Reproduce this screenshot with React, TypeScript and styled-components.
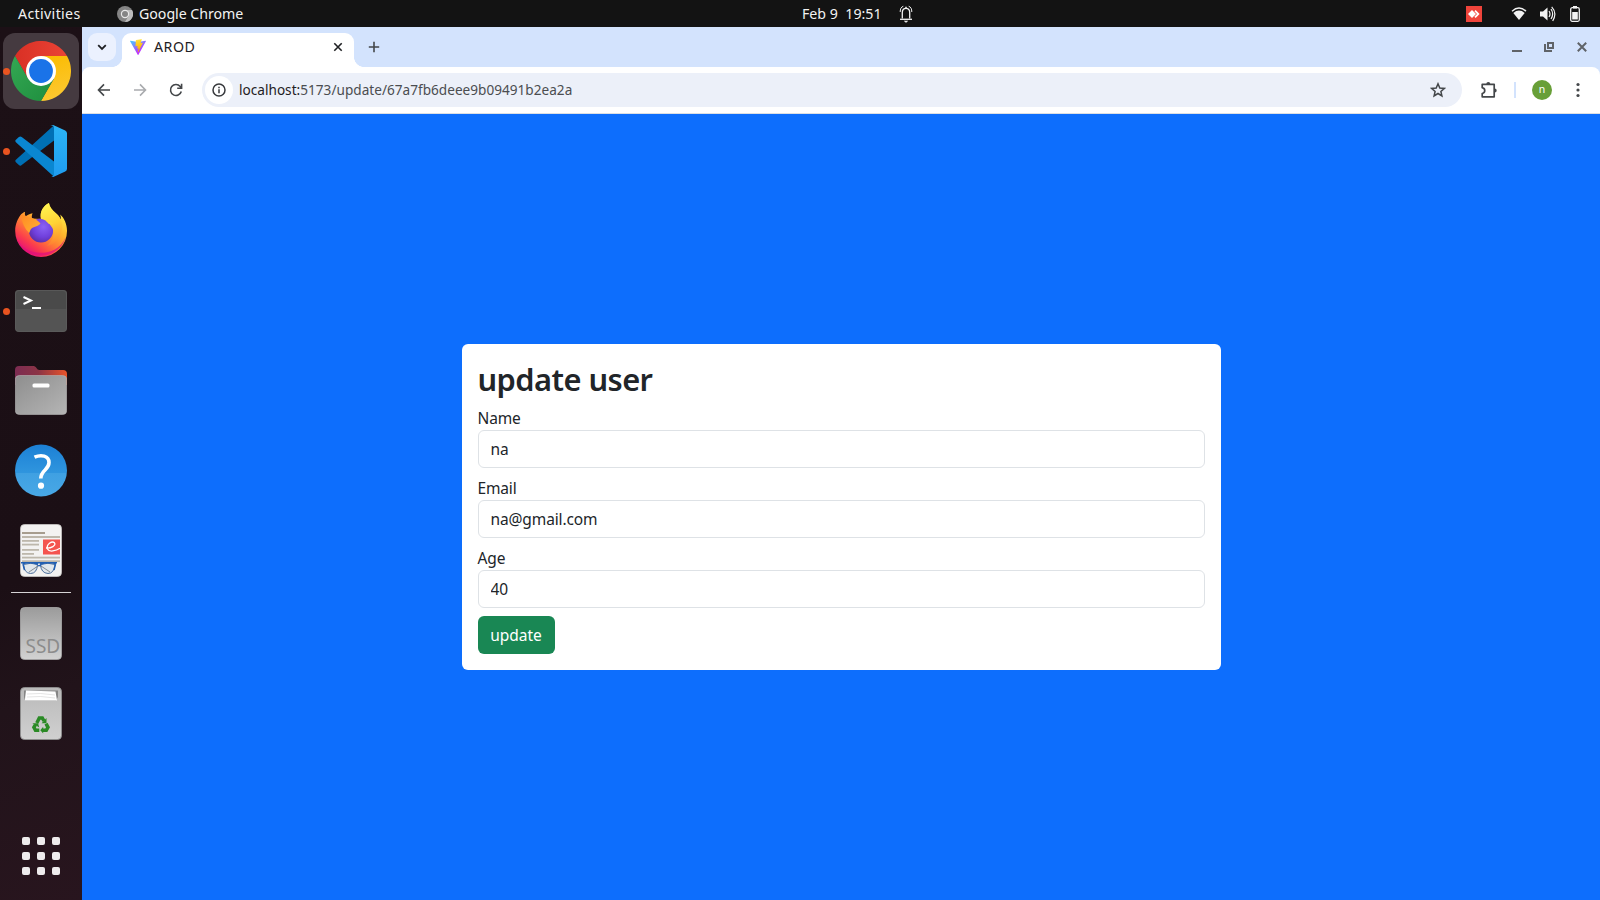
import React from 'react';
import styled, { createGlobalStyle } from 'styled-components';

const GlobalStyle = createGlobalStyle`
  *, *::before, *::after { box-sizing: border-box; }
  body { margin: 0; overflow: hidden; }
  body, input, button { font-family: 'Noto Sans', 'Open Sans', sans-serif; }
  svg { display: block; flex: none; }
`;

const Desktop = styled.div`
  display: grid;
  grid-template-columns: 82px 1fr;
  grid-template-rows: 27px 1fr;
  width: 1600px;
  height: 900px;
  overflow: hidden;
`;

/* ---------- top panel ---------- */
const Panel = styled.header`
  grid-column: 1 / -1;
  display: grid;
  grid-template-columns: 802px 1fr auto;
  align-items: center;
  background: #131313;
  color: #f2f2f2;
  font-size: 14.2px;
  line-height: 26px;
  white-space: pre;
`;
const PanelLeft = styled.div`
  display: flex;
  align-items: center;
  padding-left: 18px;
`;
const Activities = styled.span`
  width: 99px;
  letter-spacing: 0.35px;
`;
const AppName = styled.span`
  margin-left: 6px;
  letter-spacing: -0.04px;
`;
const PanelClock = styled.div`
  display: flex;
  align-items: center;
  gap: 17px;
`;
const Tray = styled.div`
  display: flex;
  align-items: center;
  padding-right: 20px;
`;
const TrayItem = styled.div<{ $gap?: number }>`
  margin-left: ${p => p.$gap ?? 0}px;
`;

/* ---------- dock ---------- */
const Dock = styled.nav`
  display: flex;
  flex-direction: column;
  gap: 4px;
  padding: 6px 3px;
  background: linear-gradient(160deg, #1c1016 0%, #1b0f15 62%, #21131a 76%, #28151e 100%);
`;
const DockItem = styled.div<{ $active?: boolean; $last?: boolean; $lift?: number }>`
  position: relative;
  display: flex;
  align-items: center;
  justify-content: center;
  width: 76px;
  height: 76px;
  flex: none;
  border-radius: 12px;
  margin-top: ${p => (p.$last ? 'auto' : 0)};
  padding-bottom: ${p => p.$lift ?? 0}px;
  background: ${p => (p.$active ? '#453a40' : 'transparent')};
`;
const RunningDot = styled.i`
  position: absolute;
  left: 0;
  top: 34.5px;
  width: 7px;
  height: 7px;
  border-radius: 50%;
  background: #e95420;
`;
const DockRule = styled.hr`
  width: 60px;
  height: 1px;
  margin: -1px auto;
  border: 0;
  flex: none;
  background: #d6d3d5;
`;
const AppGrid = styled.div`
  display: grid;
  grid-template-columns: repeat(3, 8px);
  grid-auto-rows: 8px;
  gap: 7px;
`;
const AppCell = styled.span`
  border-radius: 2px;
  background: #eeeced;
`;

/* ---------- browser ---------- */
const Browser = styled.main`
  display: grid;
  grid-template-rows: 40px 47px 1fr;
  background: #d3e3fd;
  min-width: 0;
`;
const TabStrip = styled.div`
  display: flex;
  align-items: flex-start;
  padding: 6px 13px 0 6px;
`;
const TabSearch = styled.div`
  display: grid;
  place-items: center;
  width: 28px;
  height: 28px;
  border-radius: 9px;
  background: #ebf1fe;
`;
const Tab = styled.div`
  position: relative;
  display: flex;
  align-items: center;
  width: 232px;
  height: 34px;
  margin-left: 6px;
  padding: 0 10px 6px 8px;
  border-radius: 9px 9px 0 0;
  background: #fff;
  &::before, &::after {
    content: '';
    position: absolute;
    bottom: 0;
    width: 10px;
    height: 10px;
  }
  &::before {
    left: -10px;
    background: radial-gradient(circle at 0 0, transparent 9.6px, #fff 10.2px);
  }
  &::after {
    right: -10px;
    background: radial-gradient(circle at 100% 0, transparent 9.6px, #fff 10.2px);
  }
`;
const TabTitle = styled.span`
  flex: 1;
  margin-left: 8px;
  font-size: 14.2px;
  line-height: 28px;
  letter-spacing: 0.5px;
  color: #1f2023;
`;
const NewTab = styled.div`
  display: grid;
  place-items: center;
  width: 28px;
  height: 28px;
  margin-left: 6px;
`;
const WindowControls = styled.div`
  display: flex;
  align-items: center;
  gap: 22px;
  height: 28px;
  margin-left: auto;
  svg:last-child { margin-left: 1px; }
`;
const Toolbar = styled.div`
  display: flex;
  align-items: center;
  padding: 0 8px;
  background: #fff;
  border-bottom: 1px solid #dcdfe4;
  border-radius: 8px 8px 0 0;
`;
const ToolButton = styled.div<{ $left?: number }>`
  display: grid;
  place-items: center;
  width: 28px;
  height: 28px;
  flex: none;
  margin-left: ${p => p.$left ?? 0}px;
`;
const Omnibox = styled.div`
  display: flex;
  align-items: center;
  flex: 1;
  height: 34px;
  margin-left: 12px;
  padding: 0 10px 0 3px;
  border-radius: 17px;
  background: #ecf0f9;
`;
const SiteInfo = styled.div`
  display: grid;
  place-items: center;
  width: 28px;
  height: 28px;
  border-radius: 50%;
  background: #fff;
`;
const Address = styled.div`
  flex: 1;
  margin-left: 6px;
  font-size: 13.6px;
  line-height: 20px;
  letter-spacing: 0.015px;
  color: #4b4d50;
`;
const Host = styled.span`
  color: #1f2023;
`;
const Divider = styled.span`
  width: 2px;
  height: 16px;
  margin-left: 11px;
  background: #d3e3fd;
`;
const Avatar = styled.div`
  width: 20px;
  height: 20px;
  margin-left: 16px;
  border-radius: 50%;
  background: #689f38;
  color: #fff;
  font-size: 10.5px;
  line-height: 18px;
  text-align: center;
`;

/* ---------- page ---------- */
const Page = styled.section`
  display: flex;
  align-items: center;
  justify-content: center;
  background: #0d6efd;
`;
const Card = styled.form`
  width: 50%;
  padding: 16px;
  border-radius: 6px;
  background: #fff;
  color: #212529;
  font-size: 15.5px;
`;
const Heading = styled.h2`
  margin: 0 0 8px;
  font-size: 30.8px;
  font-weight: 600;
  line-height: 38.4px;
  letter-spacing: -0.55px;
`;
const Field = styled.div`
  margin-bottom: 8px;
`;
const Label = styled.label`
  display: block;
  line-height: 24px;
  letter-spacing: -0.15px;
`;
const Input = styled.input`
  display: block;
  width: 100%;
  height: 38px;
  padding: 6px 12px;
  border: 1px solid #dee2e6;
  border-radius: 6px;
  outline: 0;
  background: #fff;
  color: #212529;
  font-size: 15.5px;
  line-height: 24px;
  letter-spacing: -0.12px;
`;
const Submit = styled.button`
  display: block;
  width: 77px;
  height: 38px;
  padding: 0;
  border: 0;
  border-radius: 6px;
  background: #198754;
  color: #fff;
  font-size: 15.5px;
  line-height: 24px;
`;

/* ---------- icons ---------- */
const ChromeLogo = () => (
  <svg width="60" height="60" viewBox="0 0 60 60">
    <defs>
      <linearGradient id="cr" x1="0" x2="1"><stop offset="0" stopColor="#d93025" /><stop offset="1" stopColor="#ea4335" /></linearGradient>
      <linearGradient id="cy" x1="0.6" y1="1" x2="0.4" y2="0"><stop offset="0" stopColor="#fcc934" /><stop offset="1" stopColor="#fbbc04" /></linearGradient>
      <linearGradient id="cg" x1="1" y1="1" x2="0" y2="0"><stop offset="0" stopColor="#1e8e3e" /><stop offset="1" stopColor="#34a853" /></linearGradient>
    </defs>
    <path d="M30 15H56A30 30 0 0 0 4 15L17 37.5L30 30Z" fill="url(#cr)" />
    <path d="M43 37.5L30 60A30 30 0 0 0 56 15H30V30Z" fill="url(#cy)" />
    <path d="M17 37.5L4 15A30 30 0 0 0 30 60L43 37.5L30 30Z" fill="url(#cg)" />
    <circle cx="30" cy="30" r="15" fill="#fff" />
    <circle cx="30" cy="30" r="11.9" fill="#1a73e8" />
  </svg>
);

const CodeLogo = () => (
  <svg width="52" height="52" viewBox="0 0 52 52">
    <defs>
      <linearGradient id="vs" x1="0" y1="0" x2="0" y2="1"><stop offset="0" stopColor="#2cb4f5" /><stop offset="1" stopColor="#1f9cf0" /></linearGradient>
    </defs>
    <path d="M39 .3L.9 34.8a1.7 1.7 0 0 0 0 2.4l3 2.8a2.2 2.2 0 0 0 2.8.1L39 15.4Z" fill="#0070b5" />
    <path d="M39 51.7L.9 17.2a1.7 1.7 0 0 1 0-2.4l3-2.7a2.2 2.2 0 0 1 2.8-.1L39 36.6Z" fill="#0a87d1" />
    <path d="M38.8 51.7a3.2 3.2 0 0 1-3.2-.6c1.2 1.1 3.4.2 3.4-1.5V2.4C39 .7 36.8-.2 35.600 1a3.200 3.200 0 0 1 3.700-.6L50.200 5.500a3.200 3.200 0 0 1 1.800 2.900v35.200a3.200 3.200 0 0 1-1.800 2.900Z" fill="url(#vs)" />
  </svg>
);

const FirefoxLogo = () => (
  <svg width="54" height="54" viewBox="0 0.8 54 54.4">
    <defs>
      <linearGradient id="fb" x1="0.85" y1="0.1" x2="0.25" y2="0.95">
        <stop offset="0" stopColor="#fff04a" /><stop offset="0.35" stopColor="#ffb52c" /><stop offset="0.6" stopColor="#ff7a35" /><stop offset="0.82" stopColor="#fb3a4e" /><stop offset="1" stopColor="#e5107a" />
      </linearGradient>
      <linearGradient id="fy" x1="0.4" y1="0" x2="0.6" y2="1">
        <stop offset="0" stopColor="#fff350" /><stop offset="0.5" stopColor="#ffd235" /><stop offset="1" stopColor="#ff8a2c" stopOpacity="0.3" />
      </linearGradient>
      <radialGradient id="fp" cx="0.6" cy="0.35" r="0.7"><stop offset="0" stopColor="#8a62f5" /><stop offset="0.6" stopColor="#7040dc" /><stop offset="1" stopColor="#5a2ca5" /></radialGradient>
      <linearGradient id="ff" x1="0" y1="0" x2="1" y2="1"><stop offset="0" stopColor="#ff8a25" /><stop offset="1" stopColor="#ffb330" /></linearGradient>
    </defs>
    <path d="M1 29C1 22 4 16.500 6 13.500C7 11.500 9.500 10 11 9.500C10.500 11.500 10.800 13 11.300 14.500C13 13 16 11.500 18.500 11C17.700 13 17.500 14.500 18 16.500L27 17C25.500 10 29 4 35 .8C35.500 4.500 38 8 42 11C44.500 13 46 15 47 17.500C47.200 15.500 46.800 14 46.300 12.500C50.500 16 53.300 23 53.200 29A26.100 26.100 0 0 1 1 29Z" fill="url(#fb)" />
    <path d="M2 35A26 26 0 0 0 52 35C47 47 36 51 27 51C15 51 6 45 2 35Z" fill="#e0127b" opacity="0.75" />
    <circle cx="27" cy="28.500" r="12.200" fill="url(#fp)" />
    <path d="M27 17C25.500 10 29 4 35 .8C35.500 4.500 38 8 42 11C48 16 50 24 47 31C45 38 40 43 33 44C40 38 42 30 37 24C35 20.500 31 17.500 27 17Z" fill="url(#fy)" />
    <path d="M7 13C10 13 12 14 14 15C18 16 23 17 26.500 21.500C25 24 20 24.500 17.500 26.500C16 27.500 16 30 15 31C11 27 8 22 7 13Z" fill="url(#ff)" />
    <path d="M32 19C35 18.500 38 20 39.500 22.500C37 21.500 36 21.500 35 22Z" fill="#ffd83c" />
  </svg>
);

const TerminalLogo = () => (
  <svg width="52" height="42" viewBox="0 0 52 42">
    <rect width="52" height="42" rx="4" fill="#545454" />
    <path d="M0 19V4a4 4 0 0 1 4-4H48a4 4 0 0 1 4 4V19Z" fill="#4a4a4a" />
    <rect x=".5" y=".5" width="51" height="41" rx="3.500" fill="none" stroke="#5c5c5c" strokeWidth=".8" />
    <path d="M8.500 7L16 10.500L8.500 14" fill="none" stroke="#fff" strokeWidth="2" />
    <rect x="17" y="17" width="9" height="2" fill="#fff" />
  </svg>
);

const FilesLogo = () => (
  <svg width="52" height="50" viewBox="0 0 52 50">
    <defs>
      <linearGradient id="fo" x1="0" x2="1"><stop offset="0" stopColor="#7c2c52" /><stop offset="0.45" stopColor="#8c3446" /><stop offset="1" stopColor="#e9542a" /></linearGradient>
      <linearGradient id="fg" x1="0" y1="0" x2="1" y2="1"><stop offset="0" stopColor="#8e8e8e" /><stop offset="1" stopColor="#b5b5b5" /></linearGradient>
    </defs>
    <path d="M0 20V5a4 4 0 0 1 4-4H18.500c3 0 3 4 6 4H48a4 4 0 0 1 4 4V20Z" fill="url(#fo)" />
    <rect x=".3" y="10.500" width="51.400" height="39" rx="4" fill="url(#fg)" stroke="#b6b6b6" strokeWidth=".6" />
    <rect x="17.500" y="18.500" width="17" height="4" rx="1.500" fill="#fff" />
  </svg>
);

const HelpLogo = () => (
  <svg width="52" height="53" viewBox="0 0 52 53">
    <defs>
      <linearGradient id="ht" x1="0" y1="0" x2="0" y2="1"><stop offset="0" stopColor="#1c80d5" /><stop offset="0.54" stopColor="#2f95de" /><stop offset="0.55" stopColor="#3fa0e2" /><stop offset="1" stopColor="#48a8e6" /></linearGradient>
    </defs>
    <circle cx="26" cy="26.500" r="26" fill="url(#ht)" />
    <path d="M19.500 13.200C26 10.300 34 11.500 34 18.500C34 26 25.800 26 25.800 34.500" fill="none" stroke="#fff" strokeWidth="3.600" />
    <circle cx="26" cy="41.700" r="3.100" fill="#fff" />
  </svg>
);

const DocsLogo = () => (
  <svg width="42" height="53" viewBox="0 0 42 53">
    <rect x=".5" y=".5" width="41" height="52" rx="4" fill="#f3f2f1" stroke="#c9c7c5" strokeWidth=".8" />
    <g fill="#bdb7ab">
      <rect x="2" y="8" width="23" height="2" fill="#a79d8e" /><rect x="2" y="12" width="38" height="2" />
      <rect x="2" y="16" width="17" height="1.800" /><rect x="2" y="19.700" width="17" height="1.800" />
      <rect x="2" y="25" width="17" height="1.800" /><rect x="2" y="29" width="12" height="1.800" />
      <rect x="2" y="32.700" width="38" height="1.800" /><rect x="2" y="36.300" width="38" height="1.800" />
    </g>
    <rect x="23" y="15.500" width="17" height="15" fill="#f4544f" />
    <path d="M26 24C31 24.500 36.500 21.500 34.500 18.800C32 16.500 26 20.500 27.500 25C29 28.500 36 27 40 24.300" fill="none" stroke="#fff" strokeWidth="1.300" />
    <g fill="#d8e2ea" fillOpacity=".7" stroke="#4d6f9c" strokeWidth="1">
      <path d="M3.500 40.500Q11 38 17.500 40.500Q17 49.500 10.500 49.500Q4 49 3.500 40.500Z" />
      <path d="M20.500 40.500Q28 38 35 40.500Q34 49.500 28 49.500Q21 49 20.500 40.500Z" />
    </g>
    <path d="M1 38.800H37M2.500 39.500Q11 37.800 18 40.300M20 40.300Q28 37.800 36 39.500M18 42Q19.500 40.800 21 42M3 40L4.500 46M35.500 40L34 46" fill="none" stroke="#2260b3" strokeWidth="1.500" />
    <path d="M9 48L18 42M21 42L30 48" stroke="#69737c" strokeWidth=".8" />
  </svg>
);

const DriveText = styled.span`
  position: absolute;
  left: 22.5px;
  bottom: 15px;
  color: #8c8c8c;
  font-size: 19px;
  line-height: 22px;
`;
const DriveLogo = () => (
  <svg width="42" height="53" viewBox="0 0 42 53">
    <defs><linearGradient id="sd" x1="0" y1="0" x2="0" y2="1"><stop offset="0" stopColor="#9b9b9b" /><stop offset="1" stopColor="#d2d2d2" /></linearGradient></defs>
    <rect x=".5" y=".5" width="41" height="52" rx="4" fill="url(#sd)" stroke="#a9a9a9" strokeWidth=".8" />
  </svg>
);

const TrashLogo = () => (
  <svg width="42" height="53" viewBox="0 0 42 53">
    <defs><linearGradient id="tr" x1="0" y1="0" x2="0" y2="1"><stop offset="0" stopColor="#b9b9b9" /><stop offset="1" stopColor="#d0d0d0" /></linearGradient></defs>
    <rect x=".5" y=".5" width="41" height="52" rx="4" fill="url(#tr)" stroke="#909090" strokeWidth=".9" />
    <path d="M4 3.500H38V10L36 13.500H5L4 10Z" fill="#858585" />
    <path d="M6 3.500L35.500 4.500L37 13.500H4.800Z" fill="#fff" />
    <path d="M7 7Q20 5.500 35 8M7 10Q20 8.500 35 11" fill="none" stroke="#d9d9d9" strokeWidth=".7" />
    <g fill="none" stroke="#2a8a25" strokeWidth="3.500">
      <path d="M16.800 36L19.300 31H22.300L24 34" />
      <path d="M26 36.600L28 40.300L26.300 43.300H22.500" />
      <path d="M19.300 43.300H15.500L13.900 40.300L15.500 37.600" />
    </g>
    <g fill="#2a8a25"><path d="M26.500 31V36.300H21.600Z" /><path d="M23.200 39.800V46.500L20.300 43.300Z" /><path d="M12.300 36.300H18L19.300 40.600Z" /></g>
  </svg>
);

const SmallChrome = () => (
  <svg width="16" height="16" viewBox="0 0 16 16">
    <circle cx="8" cy="8" r="8" fill="#858585" />
    <path d="M8 4H15A8 8 0 0 1 8 16L11.500 10Z" fill="#bcbcbc" />
    <circle cx="8" cy="8" r="4.200" fill="#e9e9e9" />
    <circle cx="8" cy="8" r="3" fill="#858585" />
  </svg>
);

const Bell = () => (
  <svg width="14" height="18" viewBox="0 0 14 18" fill="none" stroke="#f2f2f2">
    <path d="M3.300 13.500V7.500C3.300 4.500 5 3.300 7 3.300S10.700 4.500 10.700 7.500V13.500" strokeWidth="1.300" />
    <path d="M1 14.300H13" strokeWidth="1.300" /><path d="M5.300 16H8.700L7 17.500Z" fill="#f2f2f2" strokeWidth=".5" />
    <path d="M4.300 1.300C2 2 1.200 4 1.200 7M9.700 1.300C12 2 12.800 4 12.800 7" strokeWidth="1" />
    <path d="M7 3.300V1.700" strokeWidth="1.500" />
  </svg>
);

const Vite = () => (
  <svg width="16" height="16" viewBox="0 0 256 257">
    <defs>
      <linearGradient id="v1" x1="0" x2=".58" y1="0" y2=".79"><stop offset="0" stopColor="#41d1ff" /><stop offset="1" stopColor="#bd34fe" /></linearGradient>
      <linearGradient id="v2" x1=".43" x2=".5" y1=".02" y2=".89"><stop offset="0" stopColor="#ffea83" /><stop offset=".1" stopColor="#ffdd35" /><stop offset="1" stopColor="#ffa800" /></linearGradient>
    </defs>
    <path fill="url(#v1)" d="M255.200 37.900L134.900 252.900c-2.500 4.500-8.900 4.500-11.400.1L.9 37.900c-2.700-4.800 1.300-10.600 6.700-9.600l120.400 21.500c.8.100 1.600.1 2.300 0l117.900-21.500c5.400-1 9.500 4.800 7 9.600Z" />
    <path fill="url(#v2)" d="M185.400 0L96.400 17.500a3.300 3.300 0 0 0-2.600 3l-5.500 92.500c-.1 2.200 1.900 3.900 4 3.400l24.800-5.700c2.300-.5 4.400 1.500 3.900 3.800l-7.400 36.100c-.5 2.400 1.800 4.500 4.100 3.800l15.300-4.700c2.400-.7 4.600 1.400 4.100 3.800l-11.700 56.700c-.7 3.500 4 5.500 6 2.500l1.300-2 72.500-144.700c1.200-2.400-.9-5.200-3.500-4.700l-25.500 4.900c-2.400.5-4.400-1.800-3.800-4.100l16.700-57.700c.7-2.300-1.400-4.600-3.700-4.400Z" />
  </svg>
);

const AnyDesk = () => (
  <svg width="16" height="16" viewBox="0 0 16 16">
    <rect width="16" height="16" fill="#ef443b" />
    <path d="M6 4L10 8L6 12L2 8Z" fill="#fff" />
    <path d="M9 4.700L12.300 8L9 11.300" fill="none" stroke="#fff" strokeWidth="1.800" />
  </svg>
);
const Wifi = () => (
  <svg width="16" height="14" viewBox="0 0 16 14">
    <path d="M1 4.200Q8-2 15 4.200" fill="none" stroke="#f2f2f2" strokeWidth="1.400" />
    <path d="M2.300 5.900Q8 1.300 13.700 5.900L8 13Z" fill="#f2f2f2" />
  </svg>
);
const Volume = () => (
  <svg width="16" height="16" viewBox="0 0 16 16">
    <path d="M0 5.500H3L7.500 1.500V14.500L3 10.500H0Z" fill="#f2f2f2" />
    <path d="M9 5Q11 8 9 11M11 3Q14.300 8 11 13M11.700.8Q17.500 7 12.700 15" fill="none" stroke="#f2f2f2" strokeWidth="1.200" />
  </svg>
);
const Battery = () => (
  <svg width="10" height="16" viewBox="0 0 10 16">
    <rect x="3" y="0" width="4" height="2.500" fill="#f2f2f2" />
    <rect x=".7" y="1.700" width="8.600" height="13.600" rx="1.500" fill="none" stroke="#f2f2f2" strokeWidth="1.300" />
    <rect x="2.200" y="6" width="5.600" height="7.500" fill="#f2f2f2" />
  </svg>
);

const strokeIcon = (color: string, width: number) => ({ fill: 'none', stroke: color, strokeWidth: width });

const dockApps = [
  { id: 'chrome', icon: <ChromeLogo />, running: true, active: true },
  { id: 'code', icon: <CodeLogo />, running: true },
  { id: 'firefox', icon: <FirefoxLogo />, lift: 2 },
  { id: 'terminal', icon: <TerminalLogo />, running: true },
  { id: 'files', icon: <FilesLogo />, lift: 2 },
  { id: 'help', icon: <HelpLogo />, lift: 1 },
  { id: 'docs', icon: <DocsLogo />, lift: 1 },
];

const fields = [
  { id: 'name', label: 'Name', value: 'na' },
  { id: 'email', label: 'Email', value: 'na@gmail.com' },
  { id: 'age', label: 'Age', value: '40' },
];

const TopPanel = () => (
  <Panel>
    <PanelLeft>
      <Activities>Activities</Activities>
      <SmallChrome />
      <AppName>Google Chrome</AppName>
    </PanelLeft>
    <PanelClock>
      <span>{'Feb 9  19:51'}</span>
      <Bell />
    </PanelClock>
    <Tray>
      <TrayItem><AnyDesk /></TrayItem>
      <TrayItem $gap={29}><Wifi /></TrayItem>
      <TrayItem $gap={13}><Volume /></TrayItem>
      <TrayItem $gap={14}><Battery /></TrayItem>
    </Tray>
  </Panel>
);

const AppDock = () => (
  <Dock>
    {dockApps.map(app => (
      <DockItem key={app.id} $active={app.active} $lift={app.lift}>
        {app.running && <RunningDot />}
        {app.icon}
      </DockItem>
    ))}
    <DockRule />
    <DockItem $lift={1}><DriveLogo /><DriveText>SSD</DriveText></DockItem>
    <DockItem $lift={1}><TrashLogo /></DockItem>
    <DockItem $last>
      <AppGrid>{Array.from({ length: 9 }, (_, i) => <AppCell key={i} />)}</AppGrid>
    </DockItem>
  </Dock>
);

const Tabs = () => (
  <TabStrip>
    <TabSearch>
      <svg width="10" height="10" viewBox="0 0 10 10" {...strokeIcon('#1f2023', 1.8)}><path d="M1.200 3.200L5 7L8.800 3.200" /></svg>
    </TabSearch>
    <Tab>
      <Vite />
      <TabTitle>AROD</TabTitle>
      <svg width="12" height="12" viewBox="0 0 12 12" {...strokeIcon('#1f2023', 1.6)}><path d="M2.300 2.300L9.700 9.700M9.700 2.300L2.300 9.700" /></svg>
    </Tab>
    <NewTab>
      <svg width="12" height="12" viewBox="0 0 12 12" {...strokeIcon('#44474a', 1.6)}><path d="M6 .8V11.200M.8 6H11.200" /></svg>
    </NewTab>
    <WindowControls>
      <svg width="10" height="10" viewBox="0 0 10 10"><path d="M0 8H10V10H0Z" fill="#5f6368" /></svg>
      <svg width="10" height="10" viewBox="0 0 10 10" {...strokeIcon('#5f6368', 2)}><path d="M4 1H9V6H4ZM1 2V9H8" /></svg>
      <svg width="10" height="10" viewBox="0 0 10 10" {...strokeIcon('#5f6368', 2)}><path d="M.8 .8L9.200 9.200M9.200 .8L.8 9.200" /></svg>
    </WindowControls>
  </TabStrip>
);

const AddressBar = () => (
  <Toolbar>
    <ToolButton>
      <svg width="14" height="14" viewBox="0 0 14 14" {...strokeIcon('#44474a', 1.6)}><path d="M13 7H2M7 1.400L1.500 7L7 12.600" /></svg>
    </ToolButton>
    <ToolButton $left={8}>
      <svg width="14" height="14" viewBox="0 0 14 14" {...strokeIcon('#a9abae', 1.6)}><path d="M1 7H12M7 1.400L12.500 7L7 12.600" /></svg>
    </ToolButton>
    <ToolButton $left={8}>
      <svg width="14" height="14" viewBox="0 0 14 14" {...strokeIcon('#44474a', 1.6)}><path d="M12.300 8.500A5.500 5.500 0 1 1 11.200 3.400L12.500 5M12.600 .8V5.200H8.200" /></svg>
    </ToolButton>
    <Omnibox>
      <SiteInfo>
        <svg width="14" height="14" viewBox="0 0 14 14" {...strokeIcon('#37393c', 1.5)}><circle cx="7" cy="7" r="6" /><path d="M7 6.200V10.200M7 3.700V5.200" /></svg>
      </SiteInfo>
      <Address><Host>localhost:</Host>5173/update/67a7fb6deee9b09491b2ea2a</Address>
      <ToolButton>
        <svg width="16" height="16" viewBox="0 0 16 16" {...strokeIcon('#44474a', 1.5)}><path d="M8 1.800L9.800 6L14.300 6.400L10.900 9.400L11.900 13.900L8 11.500L4.100 13.900L5.100 9.400L1.700 6.400L6.200 6Z" /></svg>
      </ToolButton>
    </Omnibox>
    <ToolButton $left={13}>
      <svg width="18" height="18" viewBox="0 0 18 18">
        <path d="M2.200 3.400H14.200V15.800H2.200V12.500C5.600 12 5.600 7.200 2.200 6.700Z" fill="none" stroke="#44474a" strokeWidth="1.700" strokeLinejoin="round" />
        <path d="M6.300 3A2 2 0 0 1 10.300 3ZM14.700 7.600A2 2 0 0 1 14.700 11.600Z" fill="#44474a" />
      </svg>
    </ToolButton>
    <Divider />
    <Avatar>n</Avatar>
    <ToolButton $left={12}>
      <svg width="4" height="16" viewBox="0 0 4 16" fill="#44474a"><circle cx="2" cy="2.500" r="1.600" /><circle cx="2" cy="8" r="1.600" /><circle cx="2" cy="13.500" r="1.600" /></svg>
    </ToolButton>
  </Toolbar>
);

export default function App() {
  return (
    <>
      <GlobalStyle />
      <Desktop>
        <TopPanel />
        <AppDock />
        <Browser>
          <Tabs />
          <AddressBar />
          <Page>
            <Card onSubmit={e => e.preventDefault()}>
              <Heading>update user</Heading>
              {fields.map(f => (
                <Field key={f.id}>
                  <Label htmlFor={f.id}>{f.label}</Label>
                  <Input id={f.id} defaultValue={f.value} spellCheck={false} />
                </Field>
              ))}
              <Submit>update</Submit>
            </Card>
          </Page>
        </Browser>
      </Desktop>
    </>
  );
}
